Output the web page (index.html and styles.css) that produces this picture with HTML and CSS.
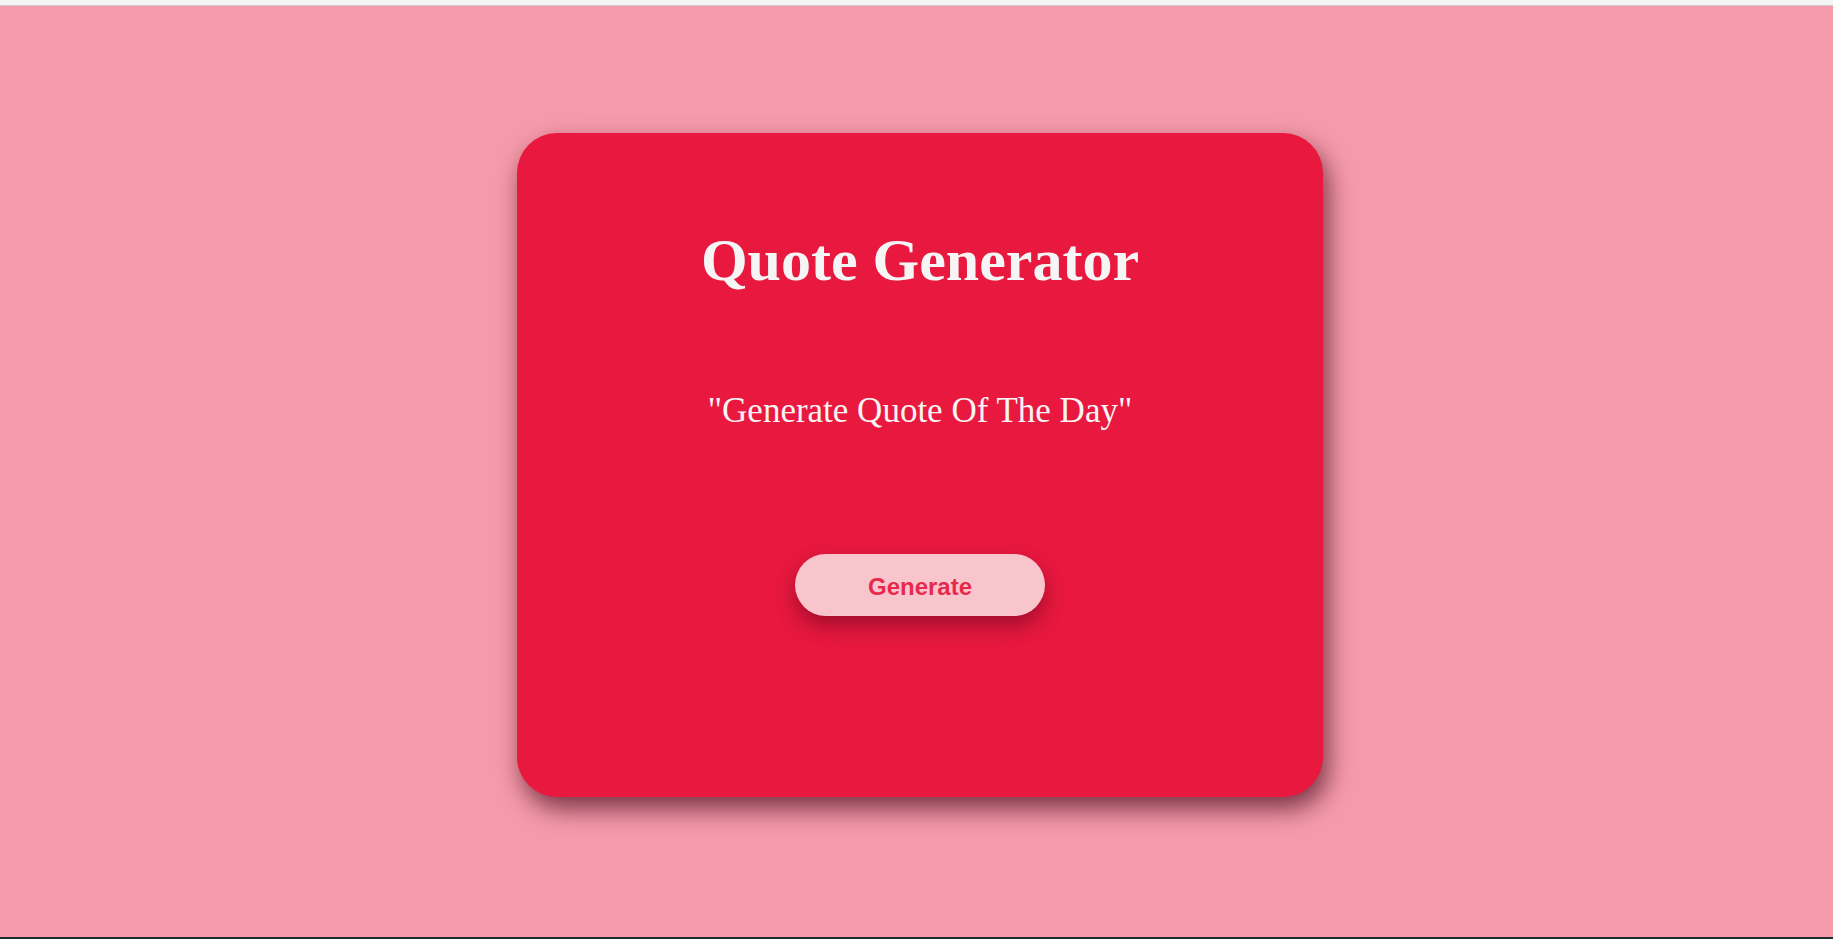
FILE: index.html
```html
<!DOCTYPE html>
<html lang="en">
<head>
<meta charset="utf-8">
<title>Quote Generator</title>
<link rel="stylesheet" href="styles.css">
</head>
<body>
<div class="topbar"></div>
<main class="stage">
  <section class="card">
    <h1 class="title">Quote Generator</h1>
    <p class="quote">"Generate Quote Of The Day"</p>
    <button class="btn" type="button">Generate</button>
  </section>
</main>
<div class="bottombar"></div>
</body>
</html>
```
FILE: styles.css
```css
html, body {
  margin: 0;
  padding: 0;
  height: 100%;
}
body {
  display: flex;
  flex-direction: column;
  background: #f59aaa;
  font-family: "Liberation Serif", "Times New Roman", serif;
  overflow: hidden;
}
.topbar {
  height: 5px;
  background: #f5f5f5;
  border-bottom: 1px solid #d3c9cb;
  flex: none;
}
.stage {
  flex: 1;
  display: flex;
  justify-content: center;
  align-items: flex-start;
  padding-top: 127px;
  padding-left: 7px;
}
.bottombar {
  height: 2px;
  background: #1e2b30;
  flex: none;
}
.card {
  width: 806px;
  height: 664px;
  box-sizing: border-box;
  background: #e8183f;
  border-radius: 40px;
  box-shadow: 5px 12px 24px rgba(60, 0, 20, 0.65);
  display: flex;
  flex-direction: column;
  align-items: center;
  padding-top: 93px;
}
.title {
  margin: 0;
  font-size: 60px;
  font-weight: bold;
  color: #f5f5f5;
}
.quote {
  margin: 96px 0 0;
  font-size: 35px;
  color: #f8f4f4;
}
.btn {
  margin-top: 123px;
  width: 250px;
  height: 62px;
  padding: 4px 0 0;
  border: none;
  border-radius: 31px;
  background: #f9c5cc;
  color: #e72a4c;
  font-family: "Liberation Sans", Arial, sans-serif;
  font-size: 24px;
  font-weight: bold;
  box-shadow: 0 10px 20px rgba(80, 0, 20, 0.45);
  cursor: pointer;
}
```
